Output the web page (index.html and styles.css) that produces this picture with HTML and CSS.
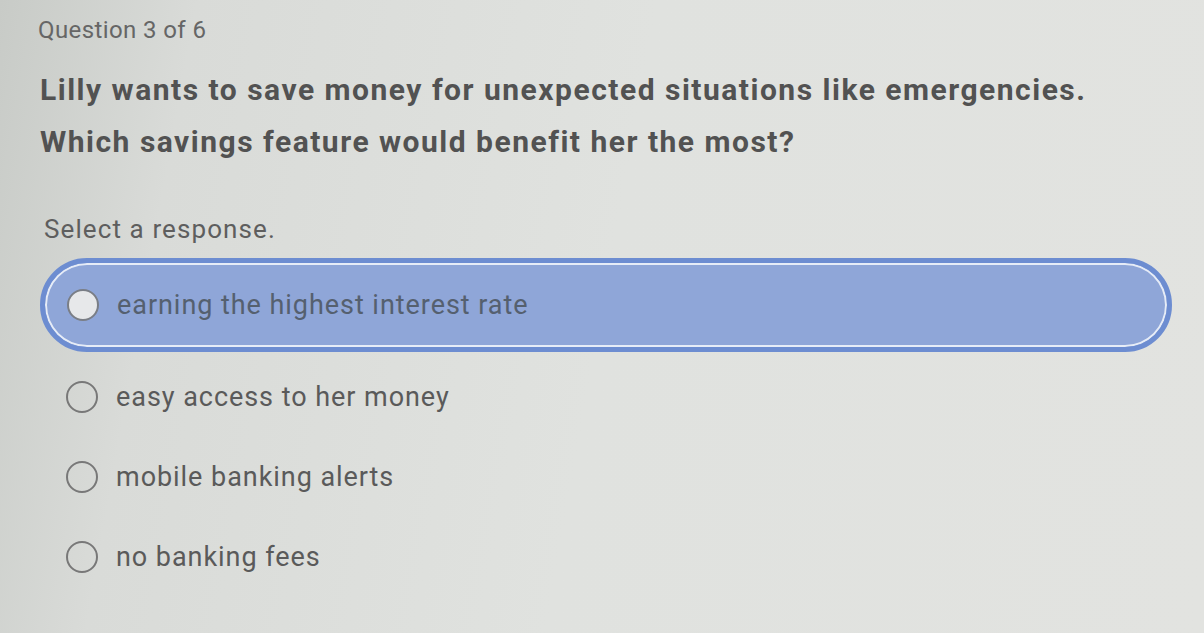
FILE: index.html
```html
<!DOCTYPE html>
<html>
<head>
<meta charset="utf-8">
<link rel="stylesheet" href="styles.css">
</head>
<body>
<div class="page">
  <div class="counter">Question 3 of 6</div>
  <h1 class="question">Lilly wants to save money for unexpected situations like emergencies.<br>Which savings feature would benefit her the most?</h1>
  <div class="prompt">Select a response.</div>
  <div class="options">
    <div class="option selected"><span class="radio"></span><span class="label">earning the highest interest rate</span></div>
    <div class="option"><span class="radio"></span><span class="label">easy access to her money</span></div>
    <div class="option"><span class="radio"></span><span class="label">mobile banking alerts</span></div>
    <div class="option"><span class="radio"></span><span class="label">no banking fees</span></div>
  </div>
</div>
</body>
</html>
```
FILE: styles.css
```css
html, body {
  margin: 0;
  height: 100%;
}
body {
  background: linear-gradient(100deg, #c8cbc7 0%, #d9dbd8 15%, #e0e2df 50%, #e2e3e0 100%);
  font-family: Roboto, "Liberation Sans", sans-serif;
  color: #585858;
  overflow: hidden;
}
.page {
  padding: 16px 0 0 38px;
}
.counter {
  font-size: 24px;
  letter-spacing: 0.4px;
  line-height: 28px;
  color: #666;
}
.question {
  margin: 20px 0 0 2px;
  font-size: 30px;
  letter-spacing: 1.5px;
  font-weight: 700;
  line-height: 52px;
  color: #525252;
}
.prompt {
  margin: 46px 0 0 6px;
  font-size: 26px;
  letter-spacing: 1.1px;
  line-height: 30px;
  color: #5e5e5e;
}
.options {
  margin-top: 14px;
  display: flex;
  flex-direction: column;
}
.option {
  display: flex;
  align-items: center;
  gap: 18px;
  height: 80px;
  padding-left: 28px;
  font-size: 27px;
  letter-spacing: 0.95px;
  color: #5a5a5a;
}
.option.selected {
  box-sizing: border-box;
  height: 94px;
  width: 1132px;
  margin-left: 2px;
  padding-left: 22px;
  border: 5px solid #6d8dd1;
  border-radius: 47px;
  background: #8fa6d8;
  box-shadow: inset 0 0 0 2px #e6ecf7;
  color: #55606f;
  margin-bottom: 5px;
}
.radio {
  box-sizing: border-box;
  width: 32px;
  height: 32px;
  border-radius: 50%;
  border: 2px solid #787878;
  flex: none;
}
.option.selected .radio {
  background: #e7e8ea;
  border-color: #7a7e86;
}
```
